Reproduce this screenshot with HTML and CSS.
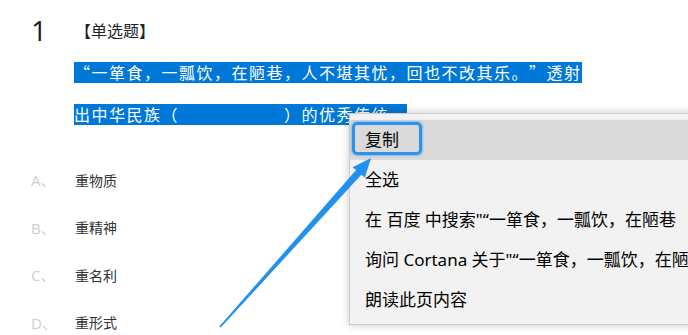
FILE: index.html
```html
<!DOCTYPE html>
<html lang="zh-CN">
<head>
    <meta charset="UTF-8">
    <title>单选题</title>
    <link rel="stylesheet" href="styles.css">
</head>
<body>
    <div class="page">
        <div class="question">
            <div class="q-head">
                <span class="q-num">1</span>
                <span class="q-type">【单选题】</span>
            </div>

            <div class="q-stem">
                <div class="stem-line"><span class="sel">“一箪食，一瓢饮，在陋巷，人不堪其忧，回也不改其乐。<span class="fw">”</span>透射</span></div>
                <div class="stem-line"><span class="sel">出中华民族（　　　　　　）的优秀传统。</span></div>
            </div>

            <div class="options">
                <div class="option"><span class="opt-key">A、</span><span class="opt-text">重物质</span></div>
                <div class="option"><span class="opt-key">B、</span><span class="opt-text">重精神</span></div>
                <div class="option"><span class="opt-key">C、</span><span class="opt-text">重名利</span></div>
                <div class="option"><span class="opt-key">D、</span><span class="opt-text">重形式</span></div>
            </div>
        </div>

        <!-- right-click menu -->
        <div class="context-menu">
            <div class="menu-item active">复制</div>
            <div class="menu-item">全选</div>
            <div class="menu-item">在 百度 中搜索"“一箪食，一瓢饮，在陋巷</div>
            <div class="menu-item">询问 Cortana 关于"“一箪食，一瓢饮，在陋</div>
            <div class="menu-item">朗读此页内容</div>
        </div>

        <!-- annotation: box + arrow pointing at 复制 -->
        <div class="mark-box"></div>
        <svg class="mark-arrow" width="688" height="335" viewBox="0 0 688 335">
            <polygon points="219.3,326.6 356.1,170.1 352.6,167.2 371,158 364.9,177.4 361.3,174.7 220.7,327.6"/>
        </svg>
    </div>
</body>
</html>
```

FILE: styles.css
```css
body {
    margin: 0;
    background: #ffffff;
    font-family: "Noto Sans", "Noto Sans CJK SC", sans-serif;
}

.page {
    position: relative;
    width: 688px;
    height: 335px;
    overflow: hidden;
}

.question {
    padding-top: 14px;
}

.q-head {
    display: flex;
    align-items: center;
    height: 32px;
}

.q-num {
    width: 75px;
    box-sizing: border-box;
    padding-left: 31px;
    font-family: "Open Sans", "Noto Sans", sans-serif;
    font-size: 28px;
    color: #1a1a1a;
    line-height: 32px;
}

.q-type {
    font-family: "Noto Sans CJK SC", sans-serif;
    font-size: 16px;
    color: #222;
}

.q-stem {
    margin-top: 16px;
    padding-left: 74px;
}

.stem-line {
    height: 21px;
    margin-bottom: 21px;
}

.stem-line:last-child {
    margin-bottom: 0;
}

.sel {
    display: inline-block;
    height: 21px;
    line-height: 21px;
    background: #0078d7;
    color: #ffffff;
    font-family: "Noto Sans CJK SC", serif;
    font-size: 16px;
    letter-spacing: 1.5px;
    white-space: nowrap;
}

/* closing quote drawn full width, like the opening one */
.sel .fw {
    display: inline-block;
    width: 17.5px;
}

.options {
    margin-top: 31px;
}

.option {
    display: flex;
    align-items: center;
    height: 47.5px;
}

.opt-key {
    width: 75px;
    box-sizing: border-box;
    padding-left: 31px;
    font-family: "Open Sans", "Noto Sans CJK SC", sans-serif;
    font-size: 15px;
    color: #cfcfcf;
}

.opt-text {
    font-family: "Noto Sans CJK SC", sans-serif;
    font-size: 14px;
    color: #333;
}

.context-menu {
    position: absolute;
    left: 349px;
    top: 113px;
    width: 420px;
    height: 212px;
    box-sizing: border-box;
    padding-top: 6px;
    background: #f2f2f2;
    border: 1px solid #cdcdcd;
    box-shadow: 0 0 8px rgba(0, 0, 0, 0.22);
}

.menu-item {
    height: 40px;
    line-height: 40px;
    padding-left: 15px;
    font-family: "Noto Sans", "Noto Sans CJK SC", sans-serif;
    font-size: 17px;
    color: #000;
    white-space: nowrap;
}

.menu-item.active {
    background: #dadada;
}

.mark-box {
    position: absolute;
    left: 352px;
    top: 122px;
    width: 70px;
    height: 33px;
    box-sizing: border-box;
    border: 3px solid #2b93ec;
    border-radius: 5px;
    box-shadow: 0 0 2px 1px rgba(43, 147, 236, 0.45);
}

.mark-arrow {
    position: absolute;
    left: 0;
    top: 0;
}

.mark-arrow polygon {
    fill: #2291ee;
}
```
